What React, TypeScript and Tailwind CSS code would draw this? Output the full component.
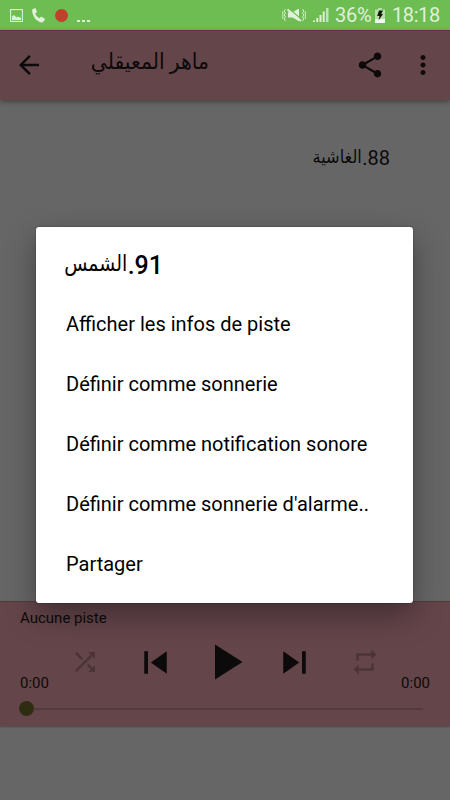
import React from 'react';
import {
  MdArrowBack,
  MdMoreVert,
  MdPlayArrow,
  MdRepeat,
  MdShare,
  MdShuffle,
  MdSkipNext,
  MdSkipPrevious,
} from 'react-icons/md';

const menuItems = [
  'Afficher les infos de piste',
  'Définir comme sonnerie',
  'Définir comme notification sonore',
  "Définir comme sonnerie d'alarme..",
  'Partager',
];

const StatusBar: React.FC = () => (
  <div className="flex h-[30px] items-center bg-[#6dbd52] pl-[10px] pr-[10px] text-[#dff1d9]">
    <svg className="h-[13px] w-[13px]" viewBox="0 0 13 13" fill="none">
      <rect x="0.6" y="0.6" width="11.8" height="11.8" stroke="currentColor" strokeWidth="1.1" />
      <path d="M2 11V7.500l2-1.500 2.500 2.500 1.500-1L11 9v2z" fill="currentColor" />
    </svg>
    <svg className="ml-[9px] h-[15px] w-[13px]" viewBox="0 0 13 15" fill="currentColor">
      <path d="M.6 1.200 2.700.2c.5-.2.9 0 1.100.5l1 2.900c.1.4 0 .8-.4 1L3.200 5.400c.7 2 2.200 3.700 4.200 4.800l1.300-1.200c.3-.3.700-.3 1.100-.1l2.800 1.700c.4.3.5.700.2 1.100l-1.500 2c-.4.600-1 .800-1.700.7C4.600 13.500.5 8.600.1 2.400 0 1.900.2 1.400.6 1.200z" />
    </svg>
    <div className="ml-[10px] h-[13px] w-[13px] rounded-full bg-[#c0402a]" />
    <div className="ml-[9px] flex gap-[2px] pt-[12px]">
      <i className="h-[2px] w-[3px] bg-current" />
      <i className="h-[2px] w-[3px] bg-current" />
      <i className="h-[2px] w-[3px] bg-current" />
    </div>

    <div className="ml-auto flex items-center">
      {/* mute / vibrate */}
      <svg className="h-[16px] w-[24px]" viewBox="0 0 24 16" fill="none" stroke="currentColor">
        <path d="M3.500 2 2.200 4l1.300 2-1.300 2 1.300 2-1.300 2 1.300 2M.8 4v8M20.500 2l1.300 2-1.300 2 1.300 2-1.300 2 1.300 2-1.300 2M23.300 4v8" strokeWidth="0.9" />
        <path d="M6 5.300h4.500L17 1.500v12.800l-6.500-3.800H6z" fill="currentColor" stroke="none" />
        <path d="M7.500 2 19 12" stroke="#6dbd52" strokeWidth="1.200" />
        <path d="M5.500 2.500 19 14" strokeWidth="1.800" />
      </svg>
      <svg className="ml-[7px] h-[16px] w-[16px]" viewBox="0 0 16 16" fill="currentColor">
        <path d="M0 13.500h2V15H0zM3.300 11h2v4h-2zM6.500 8h2v7h-2zM9.700 4.500h2V15h-2z" />
        <path d="M13 1h2.500v14H13z" opacity="0.75" />
      </svg>
      <span className="ml-[6px] w-[36px] text-[20px] leading-[30px] tracking-[-0.3px]">36%</span>
      <svg className="ml-[4px] h-[15px] w-[10px]" viewBox="0 0 10 15">
        <path d="M3 0h4v1.500h3V15H0V1.500h3z" fill="#b8e0ab" />
        <path d="M0 11h10v4H0z" fill="#eff9ec" />
        <path d="M4 2.500h4L6.200 6H8l-4.500 6.500L4.500 8H2.200z" fill="#0b1908" />
      </svg>
      <span className="ml-[7px] w-[48px] text-[20px] leading-[30px] tracking-[-0.4px]">18:18</span>
    </div>
  </div>
);

const AppBar: React.FC = () => (
  <header className="z-10 flex h-[70px] items-center border-t border-[#642f4c] bg-[#64454a] pb-[2px] pl-[14px] pr-[12px] shadow-[0_2px_5px_rgba(0,0,0,0.35)]">
    <MdArrowBack size={30} />
    <h1
      dir="rtl"
      className="mb-[6px] ml-[45px] w-[120px] origin-right scale-x-[0.93] whitespace-nowrap font-['Roboto','DejaVu_Sans',sans-serif] text-[22px] leading-[30px]"
    >
      ماهر المعيقلي
    </h1>
    <MdShare size={30} className="ml-auto" />
    <MdMoreVert size={30} className="ml-[23px]" />
  </header>
);

const Player: React.FC = () => (
  <footer className="h-[125px] border-t border-[#54393d] bg-[#64454a] px-5 pt-[6px] text-[15px] shadow-[0_1px_2px_rgba(0,0,0,0.3)]">
    <p className="h-[24px] leading-[20px]">Aucune piste</p>
    <div className="flex h-[60px] items-center pl-[50px]">
      <MdShuffle size={30} className="text-[#4b3437]" />
      <MdSkipPrevious size={45} className="ml-[33px]" />
      <MdPlayArrow size={60} className="ml-[17px]" />
      <MdSkipNext size={45} className="ml-[17px]" />
      <MdRepeat size={30} className="ml-[33px] text-[#4b3437]" />
    </div>
    <div className="-mt-[20px] flex justify-between leading-[22px]">
      <span>0:00</span>
      <span>0:00</span>
    </div>
    <div className="mt-[7px] flex items-center pr-[7px]">
      <div className="-ml-px h-[15px] w-[15px] rounded-full bg-[#2f2d11]" />
      <div className="h-[2px] flex-1 bg-[#533a3e]" />
    </div>
  </footer>
);

const TrackDialog: React.FC = () => (
  <div className="absolute left-[36px] top-[227px] z-20 h-[376px] w-[377px] rounded-[3px] bg-white pl-[30px] pt-[20px] text-black shadow-[0_12px_30px_rgba(0,0,0,0.35),0_0_2px_rgba(0,0,0,0.4)]">
    <h2
      dir="rtl"
      className="flex h-[37px] w-[97px] items-center whitespace-nowrap font-['Roboto','DejaVu_Sans',sans-serif] text-[25px] font-medium"
    >
      <span>91.</span>
      <span className="mb-[4px] origin-right scale-x-[0.86] text-[22px] font-normal">الشمس</span>
    </h2>
    <ul className="mt-[10px]">
      {menuItems.map((item) => (
        <li key={item} className="flex h-[60px] items-center whitespace-nowrap text-[20px]">
          {item}
        </li>
      ))}
    </ul>
  </div>
);

export default function App() {
  return (
    <div className="relative flex h-[800px] w-[450px] flex-col overflow-hidden bg-[#666666] font-['Roboto','DejaVu_Sans',sans-serif] text-[#0c0a0b]">
      <StatusBar />
      <AppBar />
      <main className="flex-1 pr-[60px] pt-[43px]">
        <p dir="rtl" className="flex h-[30px] items-center text-[20px]">
          <span>88.</span>
          <span className="mb-[4px] origin-right scale-x-[0.9] text-[18px]">الغاشية</span>
        </p>
      </main>
      <Player />
      <div className="h-[74px]" />
      <TrackDialog />
    </div>
  );
}
